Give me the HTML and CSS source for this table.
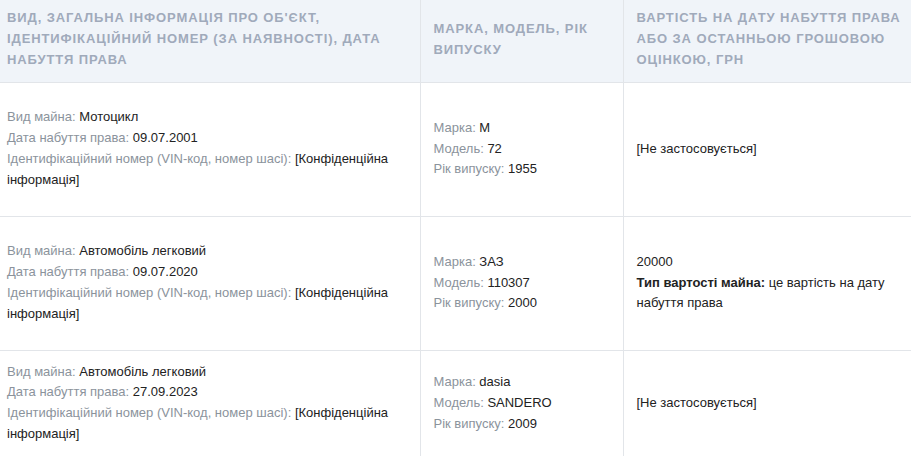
FILE: index.html
```html
<!DOCTYPE html>
<html lang="uk">
<head>
<meta charset="utf-8">
<link rel="stylesheet" href="styles.css">
</head>
<body>
<table class="tbl">
  <colgroup>
    <col class="c1">
    <col class="c2">
    <col class="c3">
  </colgroup>
  <thead>
    <tr>
      <th class="first">Вид, загальна інформація про об'єкт, ідентифікаційний номер (за наявності), дата набуття права</th>
      <th>Марка, модель, рік випуску</th>
      <th>Вартість на дату набуття права або за останньою грошовою оцінкою, грн</th>
    </tr>
  </thead>
  <tbody>
    <tr class="r-tall">
      <td class="first">
        <div><span class="lbl">Вид майна:</span> Мотоцикл</div>
        <div><span class="lbl">Дата набуття права:</span> 09.07.2001</div>
        <div><span class="lbl">Ідентифікаційний номер (VIN-код, номер шасі):</span> [Конфіденційна інформація]</div>
      </td>
      <td>
        <div><span class="lbl">Марка:</span> M</div>
        <div><span class="lbl">Модель:</span> 72</div>
        <div><span class="lbl">Рік випуску:</span> 1955</div>
      </td>
      <td>[Не застосовується]</td>
    </tr>
    <tr class="r-tall">
      <td class="first">
        <div><span class="lbl">Вид майна:</span> Автомобіль легковий</div>
        <div><span class="lbl">Дата набуття права:</span> 09.07.2020</div>
        <div><span class="lbl">Ідентифікаційний номер (VIN-код, номер шасі):</span> [Конфіденційна інформація]</div>
      </td>
      <td>
        <div><span class="lbl">Марка:</span> ЗАЗ</div>
        <div><span class="lbl">Модель:</span> 110307</div>
        <div><span class="lbl">Рік випуску:</span> 2000</div>
      </td>
      <td>
        <div>20000</div>
        <div><b>Тип вартості майна:</b> це вартість на дату набуття права</div>
      </td>
    </tr>
    <tr class="r-short">
      <td class="first">
        <div><span class="lbl">Вид майна:</span> Автомобіль легковий</div>
        <div><span class="lbl">Дата набуття права:</span> 27.09.2023</div>
        <div><span class="lbl">Ідентифікаційний номер (VIN-код, номер шасі):</span> [Конфіденційна інформація]</div>
      </td>
      <td>
        <div><span class="lbl">Марка:</span> dasia</div>
        <div><span class="lbl">Модель:</span> SANDERO</div>
        <div><span class="lbl">Рік випуску:</span> 2009</div>
      </td>
      <td>[Не застосовується]</td>
    </tr>
  </tbody>
</table>
</body>
</html>
```

FILE: styles.css
```css
html, body {
  margin: 0;
  padding: 0;
  background: #ffffff;
}
body {
  font-family: "Liberation Sans", Arial, sans-serif;
  font-size: 13px;
  color: #222222;
}
.tbl {
  width: 911px;
  border-collapse: collapse;
  table-layout: fixed;
}
.c1 { width: 420px; }
.c2 { width: 203px; }
.c3 { width: 288px; }
.tbl th {
  background: #f0f4f9;
  color: #a0aabb;
  font-weight: bold;
  text-transform: uppercase;
  letter-spacing: 0.9px;
  text-align: left;
  line-height: 21px;
  height: 82px;
  box-sizing: border-box;
  padding: 6px 4px 10px 13px;
  vertical-align: middle;
  border-bottom: 1px solid #e2e5e9;
  border-left: 1px solid #e2e5e9;
}
.tbl td {
  line-height: 20.8px;
  padding: 10px 6px 10px 13px;
  vertical-align: middle;
  border-top: 1px solid #e2e5e9;
  border-left: 1px solid #e2e5e9;
}
.tbl th.first, .tbl td.first {
  border-left: none;
  padding-left: 7px;
}
.r-tall td { height: 134px; box-sizing: border-box; }
.r-short td { height: 106px; box-sizing: border-box; }
.lbl {
  color: #8b939c;
}
b {
  font-weight: bold;
  color: #222222;
}
```
